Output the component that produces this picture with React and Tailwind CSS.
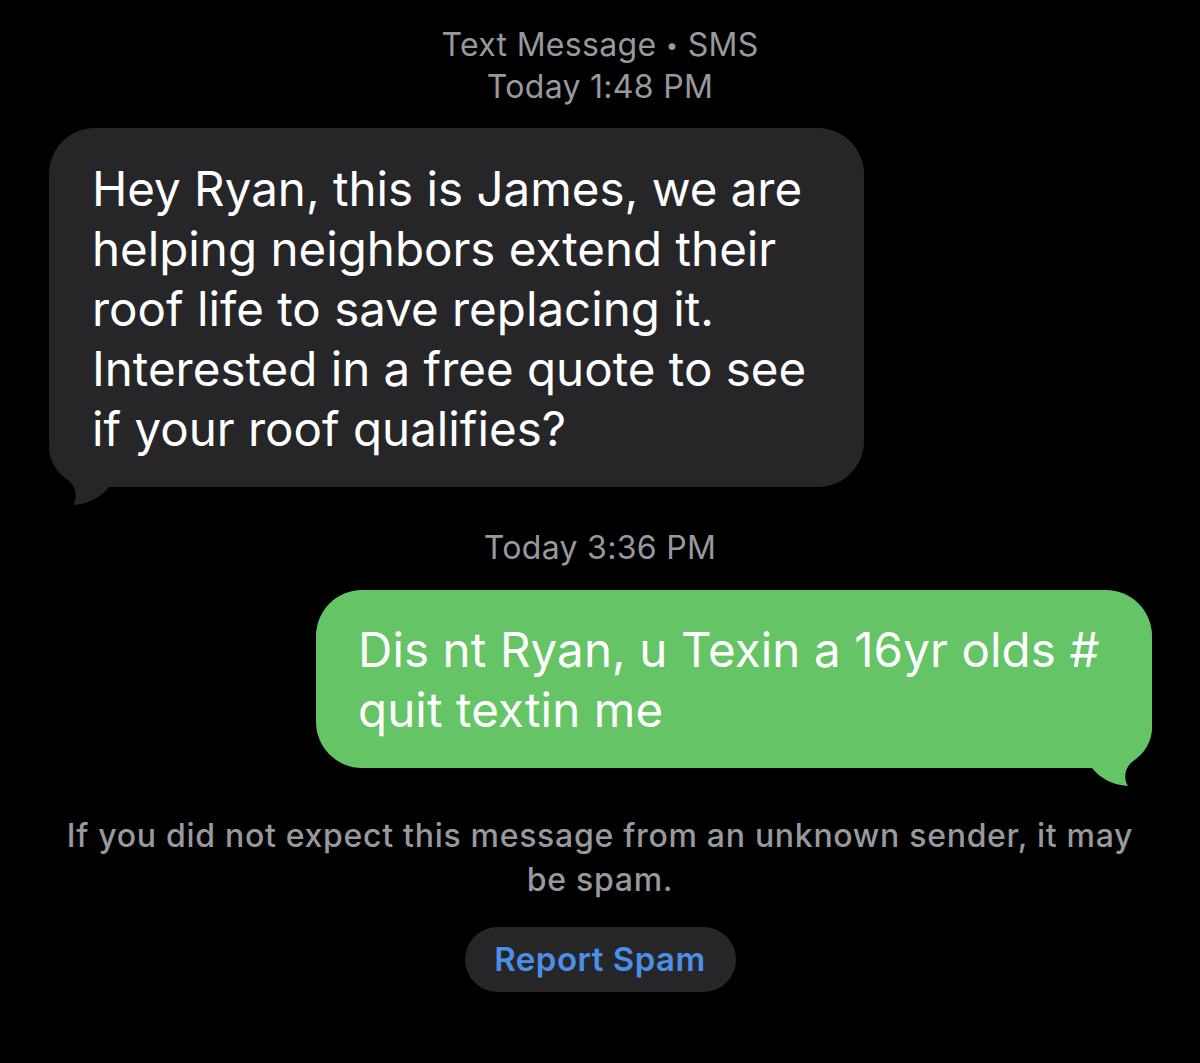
import React from 'react';

const font = { fontFamily: 'Inter, "Noto Sans", sans-serif' };

function Tail({ color, flip }) {
    return (
        <svg
            width="80" height="64" viewBox="0 -5 80 64"
            className={`absolute bottom-[-19px] ${flip ? 'right-0 -scale-x-100' : 'left-0'}`}
        >
            <path
                d="M0,-5 L0,0 C0,14 8,26 20,34 C27,40 29,50 24,58 C40,57 52,50 60,40 L80,40 L80,-5 Z"
                fill={color}
            />
        </svg>
    );
}

export default function App() {
    return (
        <div className="w-[1200px] h-[1063px] bg-black flex flex-col items-center text-white overflow-hidden" style={font}>
            {/* Header */}
            <div className="pt-[24px] text-center text-[#98989d] text-[32px] leading-[41px] tracking-[0.3px]">
                <p>Text Message <span className="text-[22px] align-[3px]">•</span> SMS</p>
                <p>Today 1:48 PM</p>
            </div>

            {/* Incoming */}
            <div className="self-start ml-[49px] mt-[21px] relative">
                <div className="relative z-10 w-[815px] rounded-[46px] bg-[#262628] pl-[43px] pr-[44px] pt-[31px] pb-[28px] text-[47.5px] leading-[60px]">
                    Hey Ryan, this is James, we are helping neighbors extend their roof life to save replacing it. Interested in a free quote to see if your roof qualifies?
                </div>
                <Tail color="#262628" />
            </div>

            <p className="mt-[40px] text-[#98989d] text-[32px] leading-[41px] tracking-[0.3px]">Today 3:36 PM</p>

            {/* Outgoing */}
            <div className="self-end mr-[48px] mt-[22px] relative">
                <div className="relative z-10 w-[836px] rounded-[46px] bg-[#65c466] pl-[42px] pr-[30px] pt-[30px] pb-[28px] text-[47.5px] leading-[60px] tracking-[0.1px]">
                    Dis nt Ryan, u Texin a 16yr olds # quit textin me
                </div>
                <Tail color="#65c466" flip />
            </div>

            {/* Footer */}
            <p className="mt-[46px] w-[1090px] text-center text-[#98989d] text-[32px] leading-[44px] tracking-[0.7px] font-medium">
                If you did not expect this message from an unknown sender, it may be spam.
            </p>

            <button className="mt-[25px] h-[65px] w-[271px] rounded-full bg-[#262628] text-[#4a8fe8] text-[33px] tracking-[0.5px] font-semibold">
                Report Spam
            </button>
        </div>
    );
}
